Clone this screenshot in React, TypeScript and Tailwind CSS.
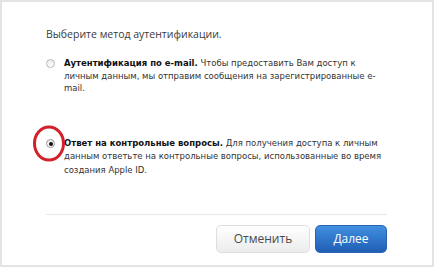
import React from "react";

export default function App() {
  const body = { fontFamily: '"DejaVu Sans", Verdana, sans-serif' };
  const title = { fontFamily: '"Open Sans", "DejaVu Sans", sans-serif' };
  return (
    <div className="w-[434px] h-[267px] bg-white border-2 border-[#e4e4e4] box-border overflow-hidden">
      <div className="pl-[44px] pr-[45px] pt-[24px] flex flex-col">
        <div className="text-[10.5px] leading-[16px] text-[#3a3a3a] whitespace-nowrap" style={title}>
          Выберите метод аутентификации.
        </div>

        <div className="mt-[15px] flex items-start">
          <div className="w-[18px] pt-[2px] flex justify-start">
            <div className="w-[9px] h-[9px] rounded-full border border-[#b8b8b8] bg-gradient-to-b from-[#ececec] to-white" />
          </div>
          <div className="text-[8.5px] leading-[12.5px] text-[#333] whitespace-nowrap" style={body}>
            <span className="font-bold text-[#111]">Аутентификация по e-mail.</span> Чтобы предоставить Вам доступ к
            <br />
            личным данным, мы отправим сообщения на зарегистрированные e-
            <br />
            mail.
          </div>
        </div>

        <div className="mt-[42px] flex items-start relative">
          <div className="w-[18px] pt-[2.5px] flex justify-start">
            <div className="w-[9px] h-[9px] rounded-full border border-[#9a9a9a] bg-gradient-to-b from-[#e6e6e6] to-white flex items-center justify-center">
              <div className="w-[4px] h-[4px] rounded-full bg-[#111]" />
            </div>
          </div>
          <div className="text-[8.5px] leading-[13.5px] text-[#333] whitespace-nowrap" style={body}>
            <span className="font-bold text-[#111]">Ответ на контрольные вопросы.</span> Для получения доступа к личным
            <br />
            данным ответьте на контрольные вопросы, использованные во время
            <br />
            создания Apple ID.
          </div>
          <svg className="absolute left-[-14px] top-[-13px]" width="34" height="39" viewBox="0 0 34 39">
            <ellipse cx="17" cy="19.5" rx="14.5" ry="16.5" fill="none" stroke="#d3212c" strokeWidth="3" />
          </svg>
        </div>

        <div className="mt-[37px] h-px bg-[#e8e8e8]" />

        <div className="mt-[10px] flex justify-end gap-[5px]">
          <button className="w-[94px] h-[28px] rounded-[5px] border border-[#dedede] bg-gradient-to-b from-white to-[#ececec] text-[12px] text-[#4a4a4a]" style={title}>
            Отменить
          </button>
          <button className="w-[72px] h-[28px] rounded-[5px] border border-[#2a64b0] bg-gradient-to-b from-[#4190e2] to-[#1f5eb4] text-[12px] text-white" style={title}>
            Далее
          </button>
        </div>
      </div>
    </div>
  );
}
